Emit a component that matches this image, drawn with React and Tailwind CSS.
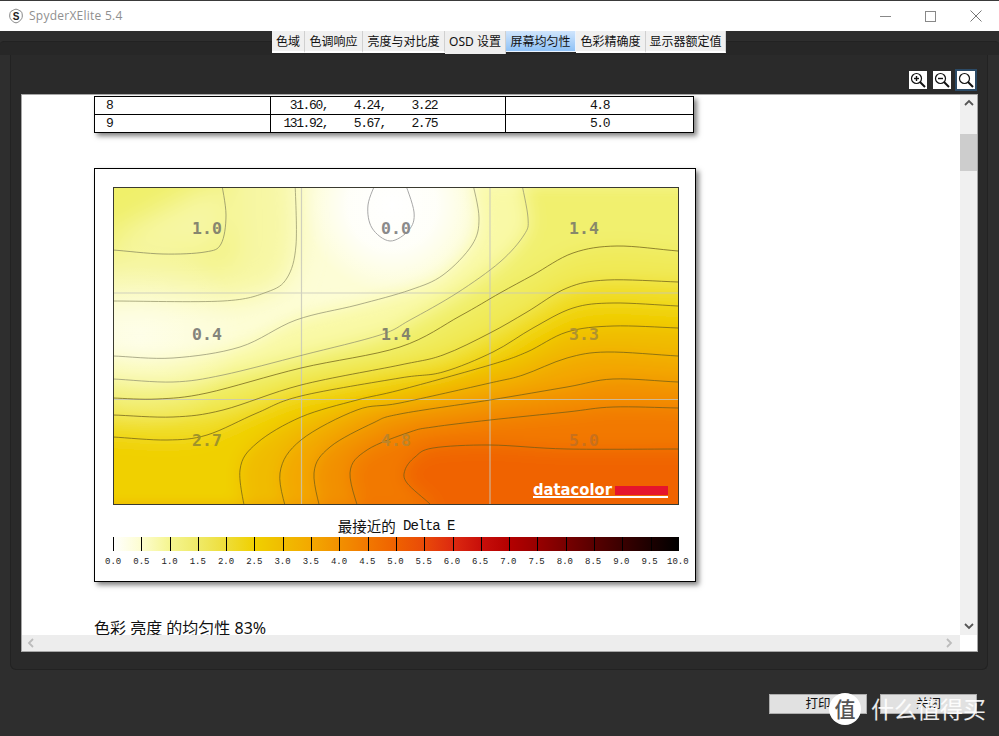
const mono = "font-['Liberation_Mono','DejaVu_Sans_Mono',monospace]";
const cjk = "font-['Noto_Sans','Noto_Sans_CJK_SC',sans-serif]";

const tabs = [
  { label: '色域', w: 'w-[33px]' },
  { label: '色调响应', w: 'w-[58px]' },
  { label: '亮度与对比度', w: 'w-[82px]' },
  { label: 'OSD 设置', w: 'w-[61px]', plain: true },
  { label: '屏幕均匀性', w: 'w-[70px]', active: true },
  { label: '色彩精确度', w: 'w-[70px]' },
  { label: '显示器额定值', w: 'w-[80px]' },
];

// contour lines in page coordinates, points outside the plot get clipped
const loop0 = [[377, 180], [368, 205], [372, 228], [390, 241], [409, 230], [414, 212], [404, 180]];
const c1 = [[90, 249], [113, 250], [163, 254], [205, 252], [221, 244], [226, 215], [221, 180]];
const c2 = [[295, 180], [296, 245], [287, 278], [267, 292], [223, 301], [113, 301], [90, 301]];
const levels = [
  { fill: '#f9f9a6', pts: [[90, 356], [113, 356], [173, 358], [240, 347], [296, 320], [357, 305], [410, 290], [443, 275], [472, 245], [479, 218], [472, 180]] },
  { fill: '#f1f06e', pts: [[90, 379], [113, 379], [173, 382], [223, 375], [303, 355], [380, 335], [410, 320], [457, 293], [500, 262], [524, 235], [528, 218], [521, 180]] },
  { fill: '#f0ea58', pts: [[90, 397], [113, 398], [157, 399], [207, 393], [301, 368], [400, 347], [460, 316], [500, 293], [533, 275], [573, 253], [617, 246], [678, 251], [720, 254]] },
  { fill: '#f0de28', pts: [[90, 415], [113, 415], [173, 417], [223, 410], [301, 385], [400, 365], [443, 355], [490, 333], [527, 312], [567, 288], [607, 280], [678, 282], [720, 284]] },
  { fill: '#f0d000', pts: [[90, 436], [113, 437], [167, 440], [207, 435], [257, 413], [301, 396], [400, 378], [443, 372], [493, 352], [533, 328], [573, 308], [613, 303], [678, 306], [720, 308]] },
  { fill: '#f0bb00', pts: [[247, 520], [240, 470], [257, 443], [301, 417], [357, 400], [400, 390], [490, 365], [527, 352], [567, 332], [613, 326], [678, 328], [720, 330]] },
  { fill: '#f3a700', pts: [[289, 520], [280, 473], [301, 440], [357, 410], [400, 403], [490, 383], [523, 375], [567, 358], [607, 352], [678, 356], [720, 358]] },
  { fill: '#f29000', pts: [[323, 520], [314, 473], [330, 447], [373, 423], [400, 414], [490, 400], [567, 387], [613, 379], [678, 382], [720, 383]] },
  { fill: '#f27900', pts: [[362, 520], [350, 473], [367, 450], [410, 432], [433, 427], [490, 420], [567, 412], [613, 407], [678, 408], [720, 409]] },
  { fill: '#f06400', pts: [[436, 512], [430, 504], [407, 483], [405, 470], [415, 457], [433, 448], [490, 445], [567, 449], [678, 449], [720, 449]] },
];

const plotLabels = [
  { text: '1.0', x: 207, y: 234, fill: '#86866f' },
  { text: '0.0', x: 396, y: 234, fill: '#8a8a8a' },
  { text: '1.4', x: 584, y: 234, fill: '#88886a' },
  { text: '0.4', x: 207, y: 340, fill: '#84847c' },
  { text: '1.4', x: 396, y: 340, fill: '#84846c' },
  { text: '3.3', x: 584, y: 340, fill: '#ae9230' },
  { text: '2.7', x: 207, y: 446, fill: '#a0942a' },
  { text: '4.8', x: 396, y: 446, fill: '#bd8428' },
  { text: '5.0', x: 584, y: 446, fill: '#c8701c' },
];

const legendTicks = Array.from({ length: 20 }, (_, i) => i);
const legendLabels = Array.from({ length: 21 }, (_, i) => (i * 0.5).toFixed(1));

function smooth(pts) {
  let d = `M${pts[0][0]} ${pts[0][1]}`;
  for (let i = 0; i < pts.length - 1; i++) {
    const p0 = pts[i - 1] || pts[i];
    const p1 = pts[i];
    const p2 = pts[i + 1];
    const p3 = pts[i + 2] || p2;
    const c1x = p1[0] + (p2[0] - p0[0]) / 6;
    const c1y = p1[1] + (p2[1] - p0[1]) / 6;
    const c2x = p2[0] - (p3[0] - p1[0]) / 6;
    const c2y = p2[1] - (p3[1] - p1[1]) / 6;
    d += ` C${c1x} ${c1y} ${c2x} ${c2y} ${p2[0]} ${p2[1]}`;
  }
  return d;
}

function HeatMap() {
  return (
    <svg viewBox="113 187 566 318" className="block w-[566px] h-[318px]">
      <defs>
        <clipPath id="plot">
          <rect x="113" y="187" width="566" height="318" />
        </clipPath>
        <filter id="soft" filterUnits="userSpaceOnUse" x="40" y="120" width="720" height="460">
          <feGaussianBlur stdDeviation="9" />
        </filter>
        <filter id="softer" filterUnits="userSpaceOnUse" x="0" y="80" width="500" height="340">
          <feGaussianBlur stdDeviation="14" />
        </filter>
        <radialGradient id="hot" gradientUnits="userSpaceOnUse" cx="392" cy="205" r="88">
          <stop offset="0" stopColor="#ffffff" />
          <stop offset="0.5" stopColor="#ffffff" stopOpacity="0.85" />
          <stop offset="1" stopColor="#ffffff" stopOpacity="0" />
        </radialGradient>
        <radialGradient id="left" gradientUnits="userSpaceOnUse" cx="140" cy="335" r="100">
          <stop offset="0" stopColor="#ffffff" stopOpacity="0.45" />
          <stop offset="1" stopColor="#ffffff" stopOpacity="0" />
        </radialGradient>
      </defs>
      <g clipPath="url(#plot)">
        <rect x="113" y="187" width="566" height="318" fill="#fdfdd6" />
        <g filter="url(#softer)">
          <path d={`${smooth(c2)} L60 301 L60 130 L295 130 Z`} fill="#f7f7a4" />
          <path d={`${smooth(c1)} M230 130 L235 262 L160 266 L60 262 L60 130 Z`} fill="#f0f06a" />
        </g>
        <g filter="url(#soft)">
          {levels.map((l, i) => (
            <path key={i} d={`${smooth(l.pts)} L750 ${l.pts[l.pts.length - 1][1]} L750 560 L60 560 L60 ${l.pts[0][1]} Z`} fill={l.fill} />
          ))}
        </g>
        <rect x="113" y="187" width="566" height="318" fill="url(#hot)" />
        <rect x="113" y="187" width="566" height="318" fill="url(#left)" />

        <path d="M301.500 187V505M490 187V505M113 293H679M113 399.500H679" stroke="#c6c6ba" strokeOpacity="0.8" fill="none" strokeWidth="1.2" />

        <path d={smooth(loop0)} stroke="#a8a8a8" fill="none" />
        <path d={smooth(c1)} stroke="#8a8a60" strokeOpacity="0.85" fill="none" strokeWidth="0.9" />
        <path d={smooth(c2)} stroke="#96966c" strokeOpacity="0.85" fill="none" strokeWidth="0.9" />
        {levels.map((l, i) => (
          <path key={i} d={smooth(l.pts)} stroke={i < 2 ? '#909070' : '#6a5a18'} strokeOpacity="0.8" strokeWidth="0.9" fill="none" />
        ))}

        {plotLabels.map((l, i) => (
          <text key={i} x={l.x} y={l.y} textAnchor="middle" fill={l.fill} fontSize="16.5" fontWeight="700" fontFamily="'DejaVu Sans Mono', monospace">
            {l.text}
          </text>
        ))}

        <text x="533" y="495" fill="#fff" fontSize="16" fontWeight="700" fontFamily="'DejaVu Sans', sans-serif" textLength="79" lengthAdjust="spacingAndGlyphs">datacolor</text>
        <rect x="615" y="486" width="53" height="9" fill="#e5152c" />
        <rect x="533" y="496" width="135" height="2" fill="#fff" />
      </g>
      <rect x="113.500" y="187.500" width="565" height="317" fill="none" stroke="#3a3a30" />
    </svg>
  );
}

function Legend() {
  return (
    <div>
      <div className="flex w-[566px] h-[14px] bg-[linear-gradient(90deg,#ffffff_0%,#fdfdd0_5%,#f5f590_10%,#efea68_15%,#eedd38_20%,#f0d000_25%,#f0bc00_30%,#f3a800_35%,#f29000_40%,#f27800_45%,#ef6100_50%,#e94a08_55%,#dd2a10_60%,#c80f0a_65%,#b40000_70%,#980000_75%,#780000_80%,#580000_85%,#3a0000_90%,#1c0000_95%,#000000_100%)]">
        {legendTicks.map((i) => (
          <div key={i} className="flex-1 border-l border-black" />
        ))}
      </div>
      <div className={`flex w-[593px] ml-[-14px] mt-[4px] ${mono} text-[9px] leading-[14px] text-[#222]`}>
        {legendLabels.map((t) => (
          <div key={t} className="flex-1 text-center">{t}</div>
        ))}
      </div>
    </div>
  );
}

function ZoomButton({ kind, focused }) {
  return (
    <div className={`flex items-center justify-center w-[22px] h-[22px] border-2 ${focused ? 'border-[#2b4a66]' : 'border-transparent'}`}>
      <svg viewBox="0 0 18 18" className="block w-[18px] h-[18px] bg-white">
        <circle cx="7.5" cy="7.5" r="5" fill="none" stroke="#111" strokeWidth="1.2" />
        <path d="M11 11l5 5" stroke="#111" strokeWidth="2" />
        {kind !== 'fit' && <path d="M5 7.5h5" stroke="#111" strokeWidth="1.4" />}
        {kind === 'in' && <path d="M7.5 5v5" stroke="#111" strokeWidth="1.4" />}
      </svg>
    </div>
  );
}

function ScrollArrow({ dir, className }) {
  const d = { up: 'M2 7l4-4 4 4', down: 'M2 4l4 4 4-4', left: 'M8 2L4 6l4 4', right: 'M4 2l4 4-4 4' }[dir];
  return (
    <svg viewBox="0 0 12 12" className={`block w-[12px] h-[12px] ${className}`}>
      <path d={d} fill="none" stroke="currentColor" strokeWidth="1.8" />
    </svg>
  );
}

function DataRow({ id, value, de, last }) {
  return (
    <div className={`flex leading-[17px] ${last ? 'h-[17px]' : 'h-[18px] border-b border-black'}`}>
      <div className="w-[176px] pl-[11px] border-r border-black">{id}</div>
      <div className="w-[235px] pl-[6px] whitespace-pre border-r border-black">{value}</div>
      <div className="flex-1 text-center">{de}</div>
    </div>
  );
}

export default function App() {
  return (
    <div className={`relative w-[999px] h-[736px] overflow-hidden bg-[#2e2e2e] ${cjk}`}>
      {/* title bar */}
      <div className="flex items-center h-[31px] bg-white border-t border-[#3a3a3a] pl-[8px] pr-[17px]">
        <svg viewBox="0 0 16 16" className="block w-[16px] h-[16px]">
          <path d="M8 1.200c1.800 0 2.600 1.200 4 1.600 1.400.5 2.300 1.700 2.300 5.200 0 2.200-1 3.600-2.300 4.600C11 13.600 9.600 14.800 8 14.800s-3-1.200-4-2.200C2.700 11.600 1.700 10.200 1.700 8c0-3.500.9-4.700 2.300-5.200 1.400-.4 2.200-1.600 4-1.600z" fill="none" stroke="#777" strokeWidth="0.9" />
          <text x="8" y="11.500" textAnchor="middle" fontSize="10" fontWeight="700" fill="#222" fontFamily="'Liberation Sans', sans-serif">S</text>
        </svg>
        <span className="ml-[5px] text-[12px] text-[#8f8f8f] font-['Open_Sans',sans-serif] tracking-[0.25px]">SpyderXElite 5.4</span>
        <div className="flex items-center gap-[34px] ml-auto">
          <div className="w-[11px] h-px bg-[#888]" />
          <div className="w-[11px] h-[11px] border border-[#888]" />
          <svg viewBox="0 0 12 12" className="block w-[12px] h-[12px]">
            <path d="M.5.5l11 11M11.500.5L.5 11.500" stroke="#777" fill="none" />
          </svg>
        </div>
      </div>

      {/* tab strip */}
      <div className="relative flex justify-start h-[24px] pl-[272px]">
        <div className="absolute left-0 right-0 top-[10px] h-[14px] bg-[#272727] border-t border-[#222] rounded-t-[4px]" />
        {tabs.map((t) => (
          <div
            key={t.label}
            className={`relative flex items-start justify-center pt-[2px] text-[12px] leading-[18px] text-[#111] border-r border-[#d0d0d0] ${t.w} ${
              t.active
                ? 'h-[21px] bg-[linear-gradient(180deg,#d0e5fc,#8fc2f6)] border-b border-[#eaf4ff]'
                : t.plain
                  ? 'h-[23px] bg-[#eeeeee]'
                  : 'h-[22px] bg-[#f0f0f0] border-b-2 border-b-white'
            }`}
          >
            {t.label}
          </div>
        ))}
      </div>

      {/* main panel */}
      <div className="ml-[10px] w-[978px] h-[615px] flex flex-col bg-[#2a2a2a] border border-t-0 border-[#222] rounded-b-[6px]">
        <div className="flex items-start justify-end h-[39px] pt-[14px] pr-[10px] gap-[2px]">
          <ZoomButton kind="in" />
          <ZoomButton kind="out" />
          <ZoomButton kind="fit" focused />
        </div>

        <div className="ml-[10px] w-[957px] h-[558px] flex flex-col bg-white border border-[#a6a6a6]">
          <div className="flex flex-1 min-h-0">
            <div className="flex-1 overflow-hidden pl-[72px]">
              {/* data table, scrolled so only the last two rows show */}
              <div className={`w-[600px] mt-px border border-black bg-white shadow-[3px_3px_5px_rgba(0,0,0,0.5)] ${mono} text-[13px] tracking-[-1.4px] text-[#111]`}>
                <DataRow id="8" value="  31.60,    4.24,    3.22" de="4.8" />
                <DataRow id="9" value=" 131.92,    5.67,    2.75" de="5.0" last />
              </div>

              {/* delta E card */}
              <div className="w-[602px] h-[414px] mt-[35px] pt-[18px] pl-[18px] border border-black bg-white shadow-[3px_3px_5px_rgba(0,0,0,0.5)]">
                <HeatMap />
                <div className="w-[566px] h-[32px] flex items-end justify-center pb-[1px] text-[#111] leading-[20px]">
                  <span className="text-[14.5px]">最接近的</span>
                  <span className={`${mono} text-[14px] tracking-[-1.1px] whitespace-pre`}> Delta E</span>
                </div>
                <Legend />
              </div>

              <div className="mt-[35px] text-[16px] leading-[22px] text-[#111]">色彩 亮度 的均匀性 83%</div>
            </div>

            {/* vertical scrollbar */}
            <div className="relative w-[17px] bg-[#f0f0f0] flex flex-col justify-between items-center py-[3px] text-[#555]">
              <ScrollArrow dir="up" />
              <div className="absolute top-[39px] left-0 w-full h-[37px] bg-[#cdcdcd]" />
              <ScrollArrow dir="down" />
            </div>
          </div>

          {/* horizontal scrollbar */}
          <div className="flex h-[16px]">
            <div className="flex-1 flex items-center justify-between px-[3px] bg-[#ededed] text-[#bcbcbc]">
              <ScrollArrow dir="left" />
              <ScrollArrow dir="right" className="mr-[2px]" />
            </div>
            <div className="w-[17px] bg-white" />
          </div>
        </div>
      </div>

      {/* footer buttons */}
      <div className="flex justify-end gap-[13px] pt-[24px] pr-[22px] text-[12.5px] text-[#111]">
        <div className="w-[98px] h-[20px] flex items-center justify-center bg-[#e1e1e1] border border-[#adadad]">打印</div>
        <div className="w-[97px] h-[20px] flex items-center justify-center bg-[#e1e1e1] border border-[#adadad]">关闭</div>
      </div>

      {/* site watermark */}
      <div className="absolute left-[829px] top-[693px] flex items-center gap-[10px]">
        <div className="w-[32px] h-[32px] rounded-full bg-white flex items-center justify-center text-[21px] font-medium leading-none text-[#555]">值</div>
        <div className="text-[23px] leading-[32px] text-white/90 whitespace-nowrap">什么值得买</div>
      </div>
    </div>
  );
}
